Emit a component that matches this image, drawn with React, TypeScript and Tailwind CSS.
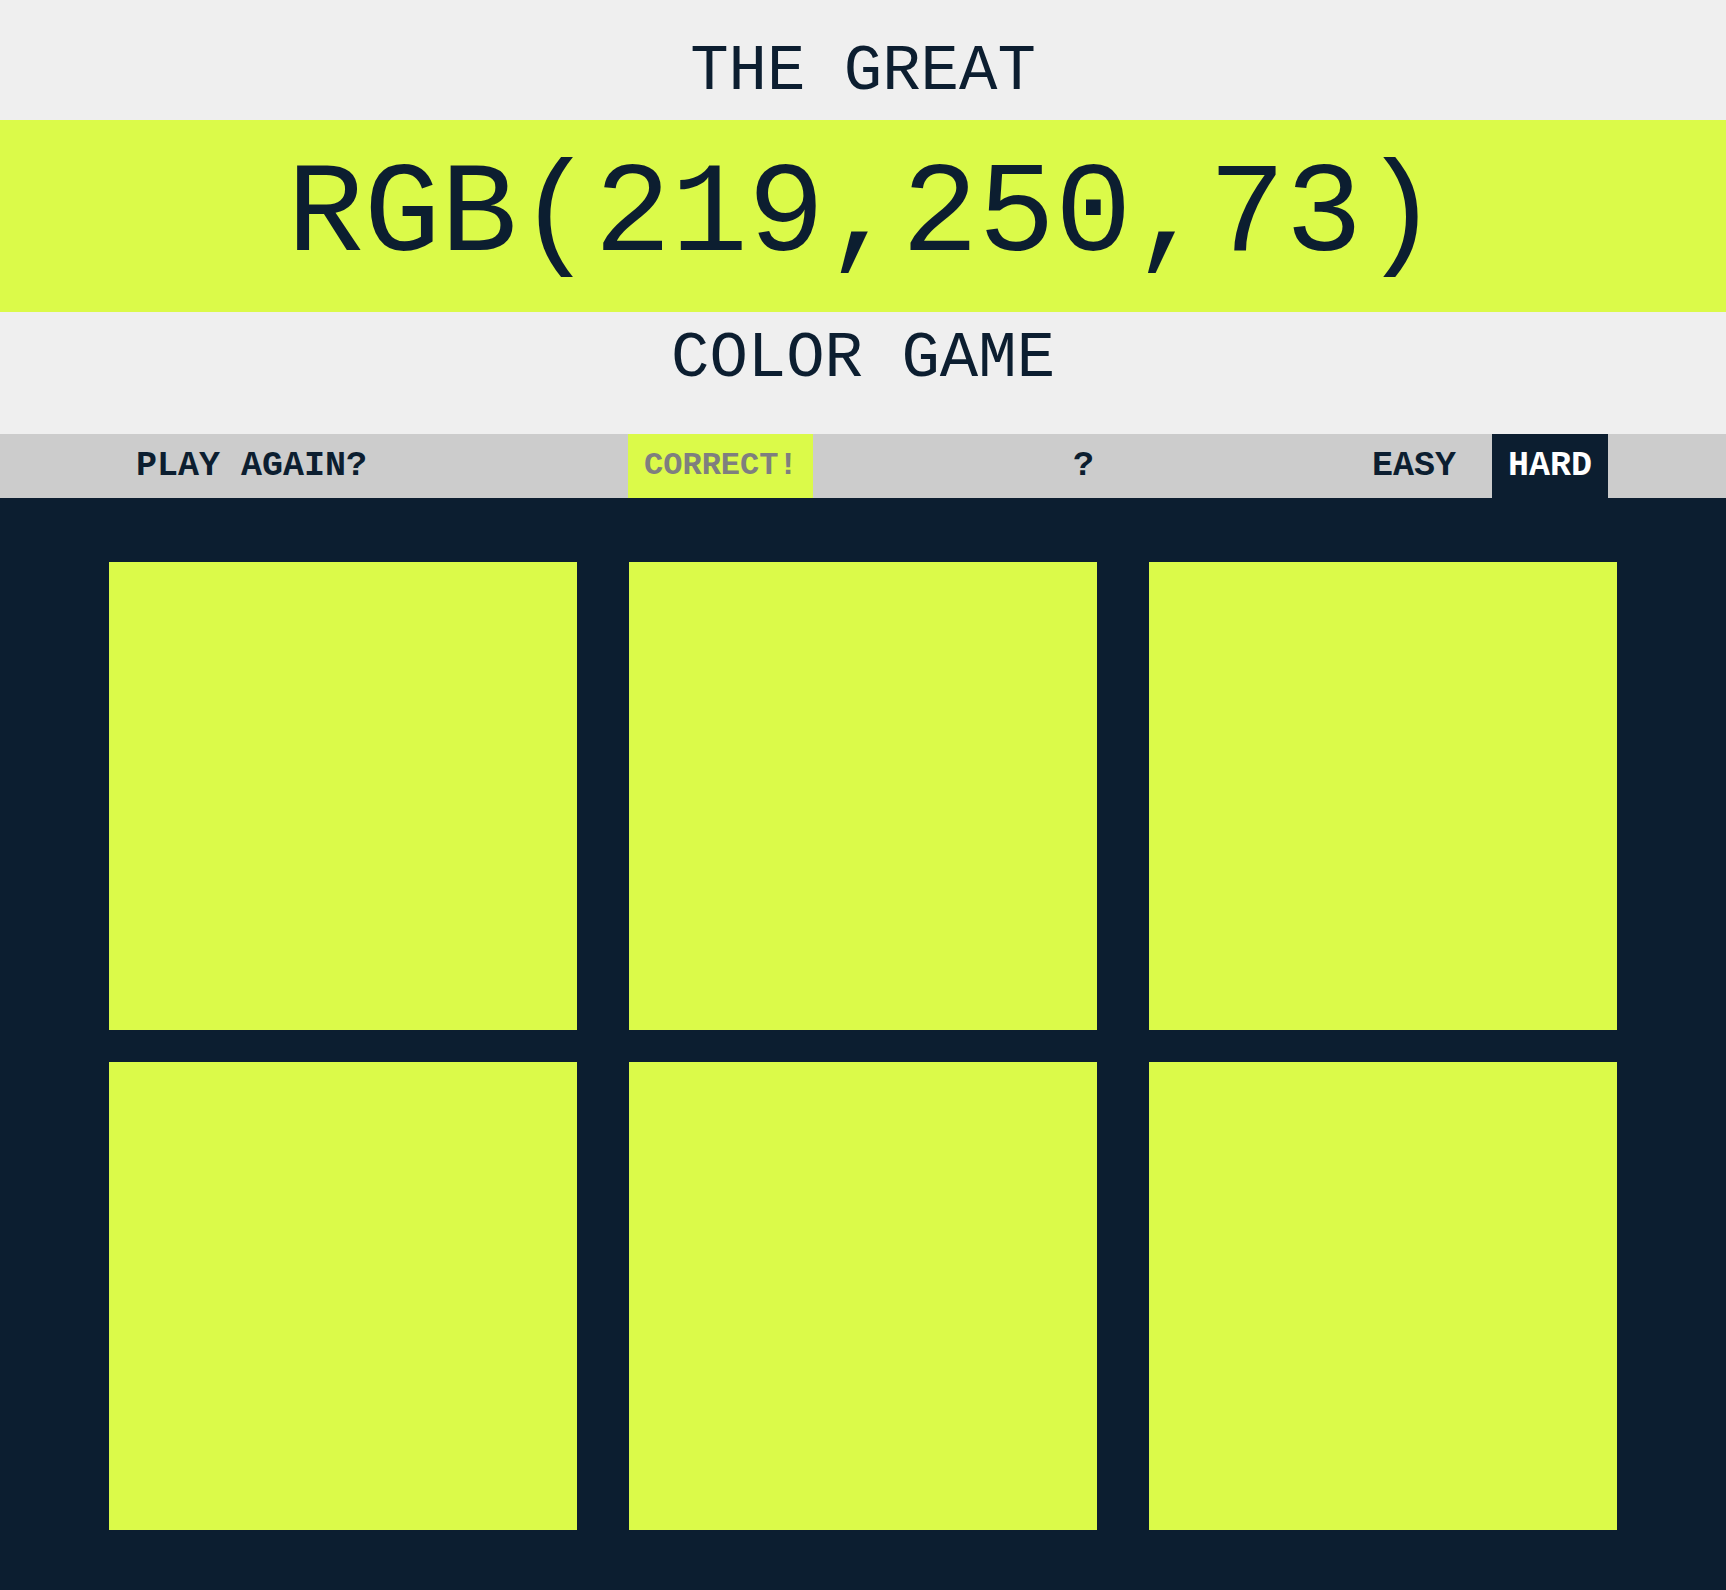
import React from "react";

export default function App() {
  const squares = [0, 1, 2, 3, 4, 5];
  return (
    <div className="w-full min-h-[1590px] bg-[#0c1e30] font-['Liberation_Mono','Courier_New',monospace] text-[#0c1e30]">
      <div className="bg-[#efefef]">
        <div className="pt-[36px] pb-[12px] text-center text-[64px] leading-[72px]">THE GREAT</div>
        <div className="h-[192px] bg-[#dbfa49] text-center text-[128px] leading-[192px] whitespace-nowrap">
          RGB(219,250,73)
        </div>
        <div className="pt-[11px] pb-[39px] text-center text-[64px] leading-[72px]">COLOR GAME</div>
      </div>
      <div className="flex h-[64px] items-stretch bg-[#cccccc] text-[35px] font-bold leading-[64px] whitespace-nowrap">
        <button className="ml-[121px] px-[15px] font-bold">PLAY AGAIN?</button>
        <span className="ml-[246px] w-[185px] bg-[#dbfa49] pl-[16px] text-[32px] text-[#7f7f7f]">CORRECT!</span>
        <span className="ml-[260px]">?</span>
        <button className="ml-[262px] flex w-[116px] justify-center font-bold">EASY</button>
        <button className="ml-[20px] flex w-[116px] justify-center bg-[#0c1e30] font-bold text-white">HARD</button>
      </div>
      <div className="mx-auto grid w-[1508px] grid-cols-3 gap-x-[52px] gap-y-[32px] pt-[64px] pb-[60px]">
        {squares.map((i) => (
          <div key={i} className="h-[468px] w-[468px] bg-[#dbfa49]" />
        ))}
      </div>
    </div>
  );
}
